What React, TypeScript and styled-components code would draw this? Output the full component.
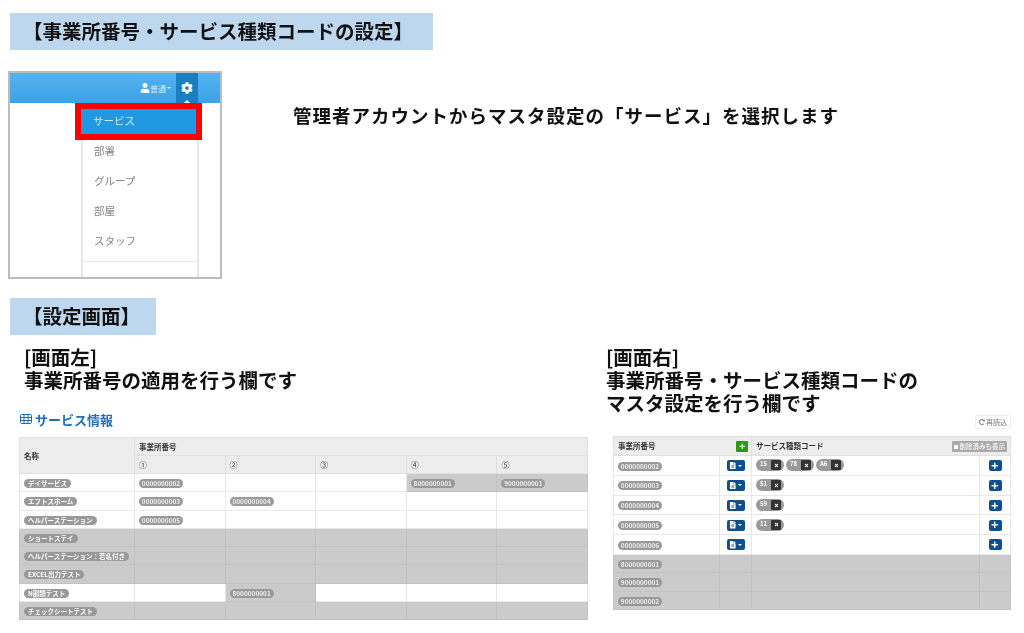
import React from 'react'
import styled, { createGlobalStyle } from 'styled-components'
import { FaCog, FaFileAlt, FaPlus, FaRedoAlt, FaTimes, FaUser } from 'react-icons/fa'

const GlobalStyle = createGlobalStyle`
  html, body {
    margin: 0;
    padding: 0;
    background: #fff;
    font-family: 'Noto Sans CJK JP', 'Noto Sans', sans-serif;
    color: #111;
  }
`

const Page = styled.div`
  width: 1024px;
  height: 633px;
  overflow: hidden;
  box-sizing: border-box;
  padding-top: 13px;
  display: flex;
  flex-direction: column;
`

const Banner = styled.h2<{ $width: number; $gap: number }>`
  box-sizing: border-box;
  width: ${({ $width }) => $width}px;
  height: 37px;
  margin: 0 0 ${({ $gap }) => $gap}px 10px;
  padding-left: 13px;
  background: #bdd7ee;
  font-size: 19.5px;
  font-weight: 700;
  line-height: 36px;
  white-space: nowrap;
  filter: blur(0.3px);
`

const IntroRow = styled.div`
  display: flex;
  align-items: flex-start;
  height: 227px;
  padding-left: 8px;
`

const MenuShot = styled.div`
  box-sizing: border-box;
  width: 214px;
  height: 208px;
  border: 2px solid #bcbcbc;
  overflow: hidden;
  filter: blur(0.4px);
`

const NavBar = styled.div`
  height: 30px;
  background: linear-gradient(#55b2ee, #3ba3e8);
  display: flex;
  justify-content: flex-end;
  padding-right: 22px;
  color: #fff;
`

const UserMenu = styled.div`
  display: flex;
  align-items: center;
  gap: 0;
  margin-right: 5px;
  font-size: 8px;
  color: #d8ecfa;
  svg {
    font-size: 10px;
    color: #fff;
  }
`

const Caret = styled.span`
  width: 0;
  height: 0;
  margin-left: 1px;
  border-left: 2px solid transparent;
  border-right: 2px solid transparent;
  border-top: 2px solid currentColor;
`

const GearTab = styled.div`
  position: relative;
  width: 22px;
  background: #1a7fc0;
  display: flex;
  align-items: center;
  justify-content: center;
  font-size: 12px;
  &::after {
    content: '';
    position: absolute;
    left: 8px;
    bottom: 0;
    border-left: 3px solid transparent;
    border-right: 3px solid transparent;
    border-bottom: 3px solid #fff;
  }
`

const DropMenu = styled.div`
  box-sizing: border-box;
  width: 118px;
  height: 176px;
  margin-left: 71px;
  border-left: 2px solid #e6e6e6;
  border-right: 2px solid #e6e6e6;
  position: relative;
  padding-top: 33px;
`

const ActiveItem = styled.div`
  position: absolute;
  left: -8px;
  top: 0;
  box-sizing: border-box;
  width: 127px;
  height: 37px;
  border: 6px solid #fe0000;
  background: #1f9ae2;
  color: #cfe8fa;
  font-size: 10.5px;
  line-height: 24px;
  padding-left: 12px;
`

const MenuItem = styled.div`
  height: 30px;
  line-height: 30px;
  padding-left: 11px;
  font-size: 10.5px;
  color: #858585;
`

const MenuDivider = styled.div`
  margin-top: 5px;
  border-top: 1px solid #e8e8e8;
`

const IntroText = styled.p`
  margin: 31px 0 0 71px;
  font-size: 18.5px;
  font-weight: 700;
  line-height: 26px;
  letter-spacing: 1px;
  white-space: nowrap;
  filter: blur(0.3px);
`

const Columns = styled.div`
  display: flex;
  align-items: flex-start;
  margin-top: 10px;
`

const LeftColumn = styled.section`
  width: 569px;
  margin-left: 19px;
`

const RightColumn = styled.section`
  width: 405px;
  margin-left: 18px;
`

const Note = styled.p<{ $indent: number; $height: number }>`
  height: ${({ $height }) => $height}px;
  margin: 0;
  padding-left: ${({ $indent }) => $indent}px;
  font-size: 19.5px;
  font-weight: 700;
  line-height: 23px;
  white-space: nowrap;
  filter: blur(0.3px);
`

const SectionTitle = styled.div`
  display: flex;
  align-items: center;
  gap: 3px;
  height: 16px;
  margin: 4px 0 10px 1px;
  color: #1c6fbd;
  font-size: 13px;
  font-weight: 700;
  filter: blur(0.3px);
`

const ReloadRow = styled.div`
  display: flex;
  justify-content: flex-end;
  height: 21px;
  margin-top: 1px;
  filter: blur(0.3px);
`

const ReloadButton = styled.div`
  box-sizing: border-box;
  display: flex;
  align-items: center;
  justify-content: center;
  gap: 1px;
  width: 36px;
  height: 14px;
  border: 1px solid #eee;
  border-radius: 2px;
  color: #777;
  font-size: 7px;
  svg {
    font-size: 6px;
  }
`

const GridTable = styled.table<{ $indent?: number }>`
  border-collapse: collapse;
  table-layout: fixed;
  width: ${({ $indent }) => ($indent ? 'calc(100% - ' + $indent + 'px)' : '100%')};
  margin-left: ${({ $indent }) => $indent || 0}px;
  filter: blur(0.5px);
  font-size: 7px;
  color: #333;
`

const Head = styled.th<{ $h?: number; $plain?: boolean }>`
  box-sizing: border-box;
  height: ${({ $h }) => $h || 19}px;
  padding: 0 0 0 4px;
  background: #ededed;
  border: 1px solid #e0e0e0;
  text-align: left;
  font-weight: ${({ $plain }) => ($plain ? 400 : 700)};
  font-size: ${({ $plain }) => ($plain ? 8 : 7.5)}px;
  line-height: 10px;
  white-space: nowrap;
`

const HeadRow = styled.div`
  display: flex;
  align-items: center;
  justify-content: space-between;
  padding-right: 3px;
`

const Cell = styled.td<{ $off?: boolean; $h?: number }>`
  box-sizing: border-box;
  height: ${({ $h }) => $h || 18.3}px;
  padding: 0 0 0 4px;
  background: ${({ $off }) => ($off ? '#cbcbcb' : '#fff')};
  border: 1px solid ${({ $off }) => ($off ? '#c2c2c2' : '#e8e8e8')};
  line-height: 10px;
  white-space: nowrap;
`

const CenterCell = styled(Cell)`
  padding: 0;
  text-align: center;
`

const Pill = styled.span`
  display: inline-block;
  padding: 0 4px;
  height: 9px;
  line-height: 9px;
  border-radius: 5px;
  background: #999;
  color: #fff;
  font-size: 6.5px;
  font-weight: 700;
  vertical-align: middle;
  &.code {
    box-sizing: border-box;
    width: 44px;
    padding: 0;
    text-align: center;
    color: #eee;
  }
`

const CodeTag = styled.span`
  display: inline-flex;
  align-items: center;
  gap: 2px;
  box-sizing: border-box;
  width: 28px;
  height: 12px;
  margin-right: 2px;
  padding: 0 3px 0 4px;
  border-radius: 6px;
  background: #999;
  color: #fff;
  font-size: 6px;
  font-weight: 700;
  line-height: 8px;
  vertical-align: middle;
`

const TagLabel = styled.span`
  flex: 1;
  height: 10px;
`

const RemoveMark = styled.span`
  display: inline-flex;
  align-items: center;
  justify-content: center;
  flex: none;
  width: 10px;
  height: 10px;
  border-radius: 1px;
  background: #333;
  color: #fff;
  font-size: 5px;
`

const IconButton = styled.span<{ $wide?: boolean }>`
  display: inline-flex;
  align-items: center;
  justify-content: center;
  gap: 1px;
  width: ${({ $wide }) => ($wide ? 18 : 13)}px;
  height: 11px;
  border-radius: 2px;
  background: #0f4f8f;
  color: #fff;
  font-size: 7.5px;
  vertical-align: middle;
`

const AddButton = styled.span`
  display: inline-flex;
  align-items: center;
  justify-content: center;
  width: 12px;
  height: 11px;
  border-radius: 1px;
  background: #2a9a12;
  color: #fff;
  font-size: 6.5px;
`

const ShowDeleted = styled.span`
  display: inline-flex;
  align-items: center;
  gap: 2px;
  height: 11px;
  padding: 0 2px;
  border-radius: 1px;
  background: #aaa;
  color: #eee;
  font-size: 6.5px;
`

const CheckBox = styled.span`
  width: 4px;
  height: 4px;
  margin-top: 2px;
  background: #fff;
`

const TableGlyph = () => (
  <svg width='12' height='10' viewBox='0 0 12 10' fill='none' stroke='currentColor' strokeWidth='1'>
    <rect x='0.5' y='0.5' width='11' height='9' rx='1' />
    <path d='M0.5 3.5h11M0.5 6.5h11M4 0.5v9M8 0.5v9' />
  </svg>
)

type ServiceRow = { name: string; codes: string[]; off: boolean[] }

const services: ServiceRow[] = [
  { name: 'デイサービス', codes: ['0000000002', '', '', '8000000001', '9000000001'], off: [false, false, false, true, true] },
  { name: 'エフトスホーム', codes: ['0000000003', '0000000004', '', '', ''], off: [false, false, false, false, false] },
  { name: 'ヘルパーステーション', codes: ['0000000005', '', '', '', ''], off: [false, false, false, false, false] },
  { name: 'ショートステイ', codes: ['', '', '', '', ''], off: [true, true, true, true, true] },
  { name: 'ヘルパーステーション：若名付き', codes: ['', '', '', '', ''], off: [true, true, true, true, true] },
  { name: 'EXCEL出力テスト', codes: ['', '', '', '', ''], off: [true, true, true, true, true] },
  { name: 'N部類テスト', codes: ['', '8000000001', '', '', ''], off: [false, true, false, false, false] },
  { name: 'チェックシートテスト', codes: ['', '', '', '', ''], off: [true, true, true, true, true] },
]

const offices = [
  { no: '0000000002', tags: ['15', '78', 'A6'] },
  { no: '0000000003', tags: ['51'] },
  { no: '0000000004', tags: ['59'] },
  { no: '0000000005', tags: ['11'] },
  { no: '0000000006', tags: [] as string[] },
]

const inactiveOffices = ['8000000001', '9000000001', '9000000002']

export default function App() {
  return (
    <Page>
      <GlobalStyle />
      <Banner $width={423} $gap={21}>【事業所番号・サービス種類コードの設定】</Banner>

      <IntroRow>
        <MenuShot>
          <NavBar>
            <UserMenu>
              <FaUser />
              普通
              <Caret />
            </UserMenu>
            <GearTab>
              <FaCog />
            </GearTab>
          </NavBar>
          <DropMenu>
            <ActiveItem>サービス</ActiveItem>
            <MenuItem>部署</MenuItem>
            <MenuItem>グループ</MenuItem>
            <MenuItem>部屋</MenuItem>
            <MenuItem>スタッフ</MenuItem>
            <MenuDivider />
          </DropMenu>
        </MenuShot>
        <IntroText>管理者アカウントからマスタ設定の「サービス」を選択します</IntroText>
      </IntroRow>

      <Banner $width={146} $gap={0}>【設定画面】</Banner>

      <Columns>
        <LeftColumn>
          <Note $indent={5} $height={62}>
            [画面左]
            <br />
            事業所番号の適用を行う欄です
          </Note>
          <SectionTitle>
            <TableGlyph />
            サービス情報
          </SectionTitle>
          <GridTable>
            <colgroup>
              <col style={{ width: 115 }} />
            </colgroup>
            <thead>
              <tr>
                <Head $h={36} rowSpan={2}>名称</Head>
                <Head $h={18} colSpan={5}>事業所番号</Head>
              </tr>
              <tr>
                {['①', '②', '③', '④', '⑤'].map((n) => (
                  <Head key={n} $h={18} $plain>{n}</Head>
                ))}
              </tr>
            </thead>
            <tbody>
              {services.map((row) => {
                const allOff = row.off.every(Boolean)
                return (
                  <tr key={row.name}>
                    <Cell $off={allOff}>
                      <Pill>{row.name}</Pill>
                    </Cell>
                    {row.codes.map((code, i) => (
                      <Cell key={i} $off={row.off[i]}>
                        {code && <Pill className='code'>{code}</Pill>}
                      </Cell>
                    ))}
                  </tr>
                )
              })}
            </tbody>
          </GridTable>
        </LeftColumn>

        <RightColumn>
          <Note $indent={0} $height={69}>
            [画面右]
            <br />
            事業所番号・サービス種類コードの
            <br />
            マスタ設定を行う欄です
          </Note>
          <ReloadRow>
            <ReloadButton>
              <FaRedoAlt />
              再読込
            </ReloadButton>
          </ReloadRow>
          <GridTable $indent={7}>
            <colgroup>
              <col style={{ width: 106 }} />
              <col style={{ width: 32 }} />
              <col />
              <col style={{ width: 31 }} />
            </colgroup>
            <thead>
              <tr>
                <Head $h={19} colSpan={2}>
                  <HeadRow>
                    事業所番号
                    <AddButton><FaPlus /></AddButton>
                  </HeadRow>
                </Head>
                <Head colSpan={2}>
                  <HeadRow>
                    サービス種類コード
                    <ShowDeleted>
                      <CheckBox />
                      削除済みも表示
                    </ShowDeleted>
                  </HeadRow>
                </Head>
              </tr>
            </thead>
            <tbody>
              {offices.map((o) => (
                <tr key={o.no}>
                  <Cell $h={19.8}>
                    <Pill className='code'>{o.no}</Pill>
                  </Cell>
                  <CenterCell $h={19.8}>
                    <IconButton $wide>
                      <FaFileAlt />
                      <Caret />
                    </IconButton>
                  </CenterCell>
                  <Cell $h={19.8}>
                    {o.tags.map((t) => (
                      <CodeTag key={t}>
                        <TagLabel>{t}</TagLabel>
                        <RemoveMark><FaTimes /></RemoveMark>
                      </CodeTag>
                    ))}
                  </Cell>
                  <CenterCell $h={19.8}>
                    <IconButton><FaPlus /></IconButton>
                  </CenterCell>
                </tr>
              ))}
              {inactiveOffices.map((no) => (
                <tr key={no}>
                  <Cell $off>
                    <Pill className='code'>{no}</Pill>
                  </Cell>
                  <Cell $off />
                  <Cell $off />
                  <Cell $off />
                </tr>
              ))}
            </tbody>
          </GridTable>
        </RightColumn>
      </Columns>
    </Page>
  )
}
